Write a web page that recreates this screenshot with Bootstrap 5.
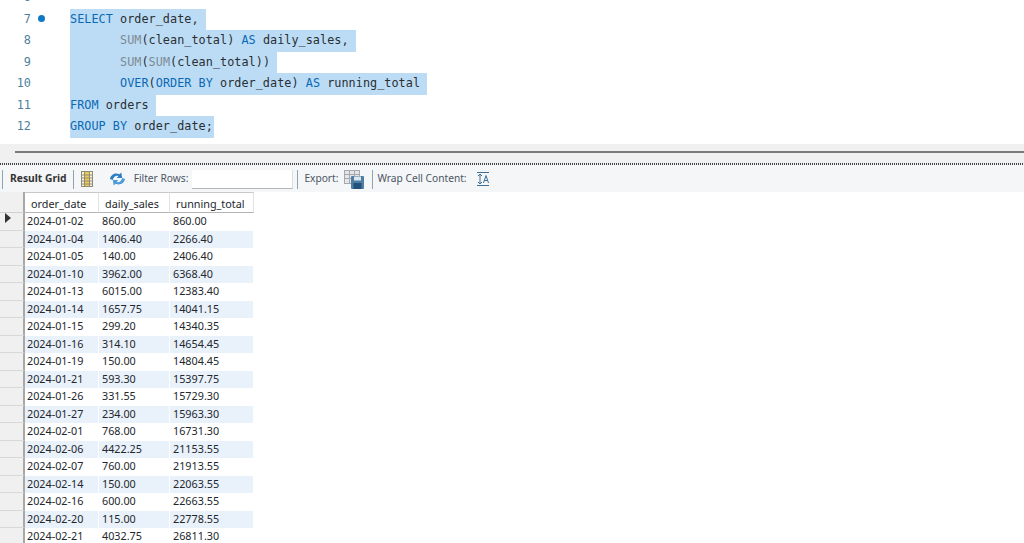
<!DOCTYPE html>
<html lang="en">
<head>
    <meta charset="UTF-8">
    <title>Query Result</title>
    <link href="https://cdn.jsdelivr.net/npm/bootstrap@5.3.0/dist/css/bootstrap.min.css" rel="stylesheet">
    <style>
        html, body { height: 543px; overflow: hidden; background: #fff; }
        .editor { height: 144px; overflow: hidden; }
        .code-list { margin-top: -13px; }
        .code-line { height: 21.5px; line-height: 21.5px; font-family: "DejaVu Sans Mono", monospace; font-size: 11.8px; letter-spacing: .04px; color: #2a2f33; }
        .line-no { width: 31px; text-align: right; color: #4f7f9c; }
        .line-dot { width: 39px; padding-left: 7px; }
        .dot { display: inline-block; width: 7px; height: 7px; border-radius: 50%; background: #0f78c4; vertical-align: 1px; }
        .sel { background: #bcdcf5; white-space: pre; padding-right: 7px; display: inline-block; height: 21.5px; }
        .sel-last { padding-right: 1px; }
        .kw { color: #0a69b4; }
        .fn { color: #7d8a94; }
        .split { height: 19px; background: #f0f0f0; padding-top: 7px; }
        .split-bar { margin-left: 15px; height: 2px; background: #77797b; }
        .dots { height: 2px; background-image: repeating-linear-gradient(90deg, #444 0 1px, #f0f0f0 1px 2px); }
        .tools { height: 27px; background: #f5f6f8; font-family: "Noto Sans", sans-serif; font-size: 10.2px; color: #4a5563; padding-top: 1px; }
        .tool-sep { width: 1px; height: 19px; background: #8fa3b5; }
        .tool-bold { font-weight: 700; color: #333; font-size: 10.3px; margin-left: 7px; }
        .filter-box { width: 101px; height: 19px; background: #fff; border-bottom: 1px solid #b5b5b5; border-right: 1px solid #ddd; margin-left: 4px; }
        .grid-wrap { font-family: "Noto Sans", sans-serif; font-size: 10.8px; color: #23272b; }
        .result-tbl { table-layout: fixed; width: 254px; margin: 0; border-collapse: separate; border-spacing: 0; }
        .result-tbl th, .result-tbl td { padding: 0; border: 0; background: transparent; font-weight: 400; white-space: nowrap; overflow: hidden; color: #23272b; box-shadow: none; }
        .result-tbl thead th { height: 21px; line-height: 17px; border-right: 1px solid #e2e2e2; border-bottom: 1px solid #b4b4b4; border-top: 1px solid #c8c8c8; background: #fff; padding-left: 6px; }
        .result-tbl thead th.corner { background: #f0f0f0; padding: 0; border-right: 2px solid #a8a8a8; border-top: 0; border-bottom: 1px solid #d0d0d0; }
        .result-tbl tbody tr { height: 17.5px; }
        .result-tbl tbody td { line-height: 16px; height: 17.5px; padding-left: 3px; border-right: 1px solid #fff; }
        .result-tbl tbody td.row-head { background: #f0f0f0; border-right: 2px solid #a8a8a8; border-bottom: 1px solid #d8d8d8; padding-left: 5px; }
        .result-tbl tbody td:nth-child(2) { padding-left: 2px; }
        .result-tbl tbody tr:nth-child(even) td:not(.row-head) { background: #e9f1fb; }
        .arrow { display: block; width: 0; height: 0; border-left: 6px solid #333; border-top: 5px solid transparent; border-bottom: 5px solid transparent; }
        .sep-first { margin-left: 2px; }
        .sep-grid { margin-left: 6px; }
        .ico-cols { margin-left: 7px; }
        .ico-refresh { margin-left: 16px; }
        .lbl-filter { margin-left: 8px; }
        .sep-filter { margin-left: 4px; }
        .lbl-export { margin-left: 6px; }
        .ico-export { margin-left: 6px; }
        .sep-export { margin-left: 8px; }
        .lbl-wrap { margin-left: 4px; }
        .ico-wrap { margin-left: 10px; }
    </style>
</head>
<body>
    <div class="editor bg-white">
        <div class="code-list" id="code"></div>
    </div>

    <div class="split"><div class="split-bar"></div></div>
    <div class="dots"></div>

    <div class="tools d-flex align-items-center">
        <div class="tool-sep sep-first"></div>
        <span class="tool-bold">Result Grid</span>
        <div class="tool-sep sep-grid"></div>
        <svg class="ico-cols" width="12" height="16" viewBox="0 0 12 16">
            <rect x=".5" y=".5" width="11" height="15" fill="#f7f3e3" stroke="#8c8c7c"/>
            <rect x="4" y="1" width="4" height="14" fill="#f6c945"/>
            <path d="M1 4h10M1 7h10M1 10h10M1 13h10M3.500 1v14M8.500 1v14" stroke="#8c8c7c" fill="none"/>
        </svg>
        <svg class="ico-refresh" width="17" height="16" viewBox="0 0 18 16">
            <path d="M1 8C2 3 7 1 11 3l2-2 1 6-6 0 2-2C8 4 5 5 4 9z" fill="#2c7fc4"/>
            <path d="M17 8c-1 5-6 7-10 5l-2 2-1-6 6 0-2 2c2 1 5 0 6-4z" fill="#4b9bd8"/>
        </svg>
        <span class="lbl-filter">Filter Rows:</span>
        <div class="filter-box"></div>
        <div class="tool-sep sep-filter"></div>
        <span class="lbl-export">Export:</span>
        <svg class="ico-export" width="20" height="19" viewBox="0 0 20 19">
            <rect x=".5" y=".5" width="15" height="13" fill="#e4e6e8" stroke="#a5a9ad"/>
            <path d="M.5 4.500h15M.5 8.500h15M5.500 .5v13M10.500 .5v13" stroke="#a5a9ad" fill="none"/>
            <rect x="7" y="6" width="13" height="13" rx="1" fill="#4f7da3"/>
            <rect x="10" y="6.500" width="7" height="4" fill="#dbe6ee"/>
            <rect x="9.500" y="13" width="8" height="6" fill="#22527c"/>
        </svg>
        <div class="tool-sep sep-export"></div>
        <span class="lbl-wrap">Wrap Cell Content:</span>
        <svg class="ico-wrap" width="12" height="14" viewBox="0 0 12 14">
            <path d="M0 .5h12M0 13.500h12M3 2v10M1 4l2-2 2 2M1 10l2 2 2-2" stroke="#3f6f94" fill="none"/>
            <path d="M6.500 11L9 3.500 11.500 11M7.500 8.500h3" stroke="#3f6f94" fill="none"/>
        </svg>
    </div>

    <div class="grid-wrap">
        <table class="table result-tbl">
            <colgroup><col style="width:25px"><col style="width:74px"><col style="width:71px"><col style="width:84px"></colgroup>
            <thead>
                <tr><th class="corner"></th><th>order_date</th><th>daily_sales</th><th>running_total</th></tr>
            </thead>
            <tbody id="rows"></tbody>
        </table>
    </div>

    <script src="https://cdn.jsdelivr.net/npm/bootstrap@5.3.0/dist/js/bootstrap.bundle.min.js"></script>
    <script>
        const kw = s => `<span class="kw">${s}</span>`;
        const fn = s => `<span class="fn">${s}</span>`;
        const indent = '       ';

        // line number, has dot, source
        const lines = [
            [6, false, ''],
            [7, true, `${kw('SELECT')} order_date,`],
            [8, false, `${indent}${fn('SUM')}(clean_total) ${kw('AS')} daily_sales,`],
            [9, false, `${indent}${fn('SUM')}(${fn('SUM')}(clean_total))`],
            [10, false, `${indent}${kw('OVER')}(${kw('ORDER BY')} order_date) ${kw('AS')} running_total`],
            [11, false, `${kw('FROM')} orders`],
            [12, false, `${kw('GROUP BY')} order_date;`]
        ];

        document.getElementById('code').innerHTML = lines.map(([num, dot, src]) => `
            <div class="code-line d-flex">
                <div class="line-no">${num}</div>
                <div class="line-dot">${dot ? '<span class="dot"></span>' : ''}</div>
                ${src ? `<div class="sel${num === 12 ? ' sel-last' : ''}">${src}</div>` : ''}
            </div>
        `).join('');

        const data = [
            ['2024-01-02', '860.00', '860.00'],
            ['2024-01-04', '1406.40', '2266.40'],
            ['2024-01-05', '140.00', '2406.40'],
            ['2024-01-10', '3962.00', '6368.40'],
            ['2024-01-13', '6015.00', '12383.40'],
            ['2024-01-14', '1657.75', '14041.15'],
            ['2024-01-15', '299.20', '14340.35'],
            ['2024-01-16', '314.10', '14654.45'],
            ['2024-01-19', '150.00', '14804.45'],
            ['2024-01-21', '593.30', '15397.75'],
            ['2024-01-26', '331.55', '15729.30'],
            ['2024-01-27', '234.00', '15963.30'],
            ['2024-02-01', '768.00', '16731.30'],
            ['2024-02-06', '4422.25', '21153.55'],
            ['2024-02-07', '760.00', '21913.55'],
            ['2024-02-14', '150.00', '22063.55'],
            ['2024-02-16', '600.00', '22663.55'],
            ['2024-02-20', '115.00', '22778.55'],
            ['2024-02-21', '4032.75', '26811.30']
        ];

        document.getElementById('rows').innerHTML = data.map((row, i) => `
            <tr>
                <td class="row-head">${i === 0 ? '<span class="arrow"></span>' : ''}</td>
                ${row.map(v => `<td>${v}</td>`).join('')}
            </tr>
        `).join('');
    </script>
</body>
</html>
